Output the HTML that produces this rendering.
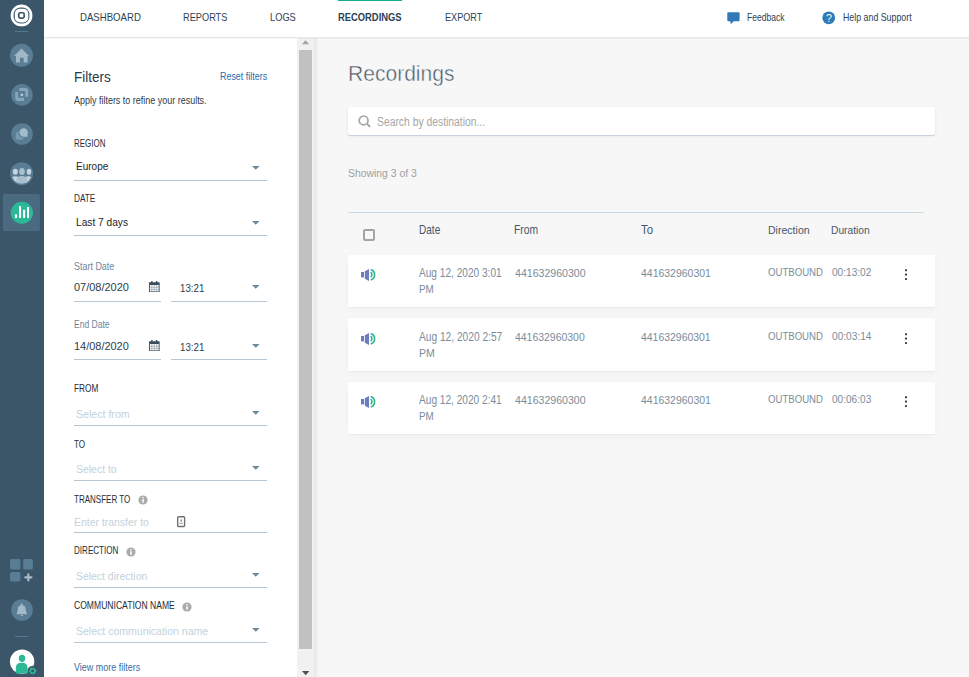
<!DOCTYPE html>
<html><head><meta charset="utf-8"><title>Recordings</title>
<style>
*{margin:0;padding:0;box-sizing:border-box}
html,body{width:969px;height:677px;overflow:hidden;background:#f7f7f7;font-family:"Liberation Sans",sans-serif}
.a{position:absolute;white-space:nowrap}
.t{position:absolute;white-space:nowrap;line-height:20px;height:20px}
.ul{position:absolute;height:1px;background:#b5c7d4}
.dd{position:absolute;width:0;height:0;border-left:3.75px solid transparent;border-right:3.75px solid transparent;border-top:3.3px solid #6f899c}
.row{position:absolute;left:348px;width:587px;background:#fff;box-shadow:0 1px 0 rgba(0,0,0,0.03),0 2px 8px rgba(0,0,0,0.035)}
</style></head><body>
<div class="a" style="left:0;top:0">
<svg width="44" height="677" style="position:absolute;left:0;top:0">
 <defs><clipPath id="pc"><circle cx="21.65" cy="173.5" r="10.2"/></clipPath></defs>
 <rect width="44" height="677" fill="#3b5669"/>
 <circle cx="21.55" cy="15.45" r="10.9" fill="#fff"/>
 <rect x="13.6" y="7.6" width="15.8" height="15.9" rx="6.8" fill="#3b5669"/>
 <rect x="14.8" y="8.8" width="13.5" height="13.7" rx="5" fill="#fff"/>
 <rect x="17.9" y="11.9" width="7.1" height="7.1" rx="2.4" fill="#3b5669"/>
 <rect x="19.6" y="13.6" width="3.7" height="3.7" rx="0.8" fill="#fff"/>
 <rect x="15" y="31" width="13" height="1" fill="#557990"/>
 <circle cx="21.5" cy="55.3" r="11.5" fill="#587d94"/>
 <path d="M14 56 L21.5 48.5 L29 56 L27.5 56 L27.5 62.5 L23.6 62.5 L23.6 57.8 L19.9 57.8 L19.9 62.5 L16 62.5 L16 56 Z" fill="#a0b8c6"/>
 <circle cx="21.9" cy="94.9" r="10.8" fill="#587d94"/>
 <path d="M19.4 87.9 H25.2 A3 3 0 0 1 28.2 90.9 V96.7 H25.3 V91 H19.4 Z" fill="#87a6b9"/>
 <path d="M15.2 92.1 H18.1 V97.8 H24 V100.9 H18.2 A3 3 0 0 1 15.2 97.9 Z" fill="#87a6b9"/>
 <rect x="20.7" y="93.7" width="2.3" height="2.3" fill="#b8ccd8"/>
 <circle cx="22" cy="134" r="10.8" fill="#587d94"/>
 <circle cx="20.3" cy="135.2" r="4.6" fill="#7b9bae"/>
 <rect x="15.7" y="135.2" width="4.6" height="4.3" fill="#7b9bae"/>
 <circle cx="23.65" cy="132.5" r="5.3" fill="#587d94"/>
 <circle cx="23.65" cy="132.5" r="4.2" fill="#a3bccb"/>
 <path d="M24 136.7 L27.6 136.7 L27.3 134 Z" fill="#a3bccb"/>
 <circle cx="21.65" cy="173.7" r="11.5" fill="#587d94"/>
 <g clip-path="url(#pc)">
  <ellipse cx="15.3" cy="180.5" rx="5" ry="4.3" fill="#c5d4dd"/>
  <ellipse cx="28.4" cy="180.5" rx="5" ry="4.3" fill="#c5d4dd"/>
  <path d="M16.5 186 V180 Q16.5 176 21.9 176 Q27.3 176 27.3 180 V186 Z" fill="#a9c0cd"/>
 </g>
 <ellipse cx="15.3" cy="171.8" rx="2.5" ry="3" fill="#c5d4dd"/>
 <ellipse cx="29" cy="171.8" rx="2.3" ry="3" fill="#c5d4dd"/>
 <ellipse cx="22" cy="171.5" rx="2.8" ry="3.5" fill="#a9c0cd"/>
 <rect x="2.9" y="193.9" width="37" height="37" rx="1.5" fill="#4a6a80"/>
 <circle cx="21.9" cy="212.75" r="11.1" fill="#2bb896"/>
 <rect x="14.9" y="214.4" width="2.2" height="3.5" fill="#fff"/>
 <rect x="19" y="206.2" width="2.1" height="11.7" fill="#fff"/>
 <rect x="23" y="209.8" width="2.1" height="8.1" fill="#fff"/>
 <rect x="27" y="207" width="2" height="10.9" fill="#fff"/>
 <rect x="10" y="559" width="10.4" height="10.6" rx="1.6" fill="#587d94"/>
 <rect x="23.2" y="559" width="9.7" height="10.6" rx="1.6" fill="#587d94"/>
 <rect x="10" y="572" width="10.4" height="9.6" rx="1.6" fill="#587d94"/>
 <path d="M28.35 574.4 V580.4 M25.3 577.4 H31.4" stroke="#a5bccb" stroke-width="2.2" stroke-linecap="round"/>
 <circle cx="22" cy="610" r="10.8" fill="#587d94"/>
 <path d="M16.6 614.2 L17.3 612 L18 607.5 Q18.5 605.3 21.7 605 Q24.9 605.3 25.4 607.5 L26.3 612 L27 614.2 Z" fill="#a2bac8"/>
 <circle cx="21.7" cy="604.6" r="1" fill="#a2bac8"/>
 <rect x="21" y="615" width="1.8" height="1" fill="#a2bac8"/>
 <rect x="15" y="636" width="13.5" height="1" fill="#557990"/>
 <circle cx="22.1" cy="661.6" r="12.2" fill="#fff"/>
 <ellipse cx="22" cy="658.3" rx="3.2" ry="3.6" fill="#2bb896"/>
 <path d="M15.8 673.5 V668 Q15.8 662.7 21.7 662.7 Q27.6 662.7 27.6 668 V673.5 Z" fill="#2bb896"/>
 <circle cx="32.7" cy="670.9" r="5.2" fill="#3b5669"/>
 <circle cx="32.7" cy="670.9" r="2.6" fill="none" stroke="#2bb896" stroke-width="1.8" stroke-dasharray="1.5 0.9"/>
 <circle cx="32.7" cy="670.9" r="2.2" fill="none" stroke="#2bb896" stroke-width="1.2"/>
</svg>
</div>

<div class="a" style="left:44px;top:0;width:925px;height:37px;background:#fff"></div>
<div class="a" style="left:338px;top:0;width:64px;height:1px;background:#14ae8c"></div>
<svg class="a" style="left:727px;top:12px" width="13" height="13"><rect x="0.3" y="0.3" width="12.3" height="8.9" rx="1" fill="#2f7ab7"/><path d="M3.2 9 L3.9 12.3 L6.8 9 Z" fill="#2f7ab7"/></svg>
<svg class="a" style="left:822px;top:11px" width="14" height="14"><circle cx="6.7" cy="6.8" r="6.4" fill="#2f7ab7"/><text x="6.8" y="10.6" font-size="10.5" text-anchor="middle" fill="#fff" font-family="Liberation Sans">?</text></svg>

<div class="a" style="left:44px;top:38px;width:253px;height:639px;background:#fff"></div>
<div class="a" style="left:297px;top:38px;width:17px;height:639px;background:#f1f1f1"></div>
<div class="a" style="left:299px;top:50px;width:13px;height:599px;background:#c1c1c1"></div>
<svg class="a" style="left:302px;top:40px" width="8" height="5"><path d="M0 4.2 L3.6 0.2 L7.2 4.2 Z" fill="#a3a3a3"/></svg>
<svg class="a" style="left:302px;top:671px" width="8" height="5"><path d="M0 0 L7.4 0 L3.7 4.2 Z" fill="#505050"/></svg>
<div class="a" style="left:314px;top:38px;width:5px;height:639px;background:linear-gradient(90deg,#e5e5e5,#f7f7f7)"></div>
<div class="a" style="left:44px;top:37px;width:925px;height:1px;background:rgba(0,0,0,0.063)"></div>
<div class="a" style="left:44px;top:38px;width:925px;height:1px;background:rgba(0,0,0,0.03)"></div>

<div class="ul" style="left:74px;top:180px;width:193px"></div>
<div class="ul" style="left:74px;top:235px;width:193px"></div>
<div class="ul" style="left:74px;top:425px;width:193px"></div>
<div class="ul" style="left:74px;top:480px;width:193px"></div>
<div class="ul" style="left:74px;top:532px;width:193px"></div>
<div class="ul" style="left:74px;top:587px;width:193px"></div>
<div class="ul" style="left:74px;top:642px;width:193px"></div>
<div class="ul" style="left:74px;top:301px;width:87px"></div>
<div class="ul" style="left:171px;top:301px;width:96px"></div>
<div class="ul" style="left:74px;top:359px;width:87px"></div>
<div class="ul" style="left:171px;top:359px;width:96px"></div>
<svg class="a" style="left:252.1px;top:166px" width="8" height="4"><path d="M0 0 H7.6 L3.8 3.7 Z" fill="#6f899c"/></svg>
<svg class="a" style="left:252.1px;top:221.2px" width="8" height="4"><path d="M0 0 H7.6 L3.8 3.7 Z" fill="#6f899c"/></svg>
<svg class="a" style="left:252.1px;top:285.2px" width="8" height="4"><path d="M0 0 H7.6 L3.8 3.7 Z" fill="#6f899c"/></svg>
<svg class="a" style="left:252.1px;top:343.8px" width="8" height="4"><path d="M0 0 H7.6 L3.8 3.7 Z" fill="#6f899c"/></svg>
<svg class="a" style="left:252.1px;top:411px" width="8" height="4"><path d="M0 0 H7.6 L3.8 3.7 Z" fill="#6f899c"/></svg>
<svg class="a" style="left:252.1px;top:466.1px" width="8" height="4"><path d="M0 0 H7.6 L3.8 3.7 Z" fill="#6f899c"/></svg>
<svg class="a" style="left:252.1px;top:573px" width="8" height="4"><path d="M0 0 H7.6 L3.8 3.7 Z" fill="#6f899c"/></svg>
<svg class="a" style="left:252.1px;top:628.2px" width="8" height="4"><path d="M0 0 H7.6 L3.8 3.7 Z" fill="#6f899c"/></svg>
<svg class="a" style="left:149px;top:281px" width="11" height="11" viewBox="0 0 11 11">
 <rect x="0.45" y="1.8" width="9.7" height="9" fill="none" stroke="#3b4d5e" stroke-width="0.9"/>
 <rect x="0.45" y="1.8" width="9.7" height="2.2" fill="#3b4d5e"/>
 <rect x="2.2" y="0" width="1.4" height="2.4" rx="0.5" fill="#3b4d5e"/>
 <rect x="6.9" y="0" width="1.4" height="2.4" rx="0.5" fill="#3b4d5e"/>
 <path d="M0.5 6.2 H10.1 M0.5 8.4 H10.1 M2.85 4 V10.8 M5.3 4 V10.8 M7.75 4 V10.8" stroke="#7d8b97" stroke-width="0.55"/>
</svg>
<svg class="a" style="left:149px;top:340px" width="11" height="11" viewBox="0 0 11 11">
 <rect x="0.45" y="1.8" width="9.7" height="9" fill="none" stroke="#3b4d5e" stroke-width="0.9"/>
 <rect x="0.45" y="1.8" width="9.7" height="2.2" fill="#3b4d5e"/>
 <rect x="2.2" y="0" width="1.4" height="2.4" rx="0.5" fill="#3b4d5e"/>
 <rect x="6.9" y="0" width="1.4" height="2.4" rx="0.5" fill="#3b4d5e"/>
 <path d="M0.5 6.2 H10.1 M0.5 8.4 H10.1 M2.85 4 V10.8 M5.3 4 V10.8 M7.75 4 V10.8" stroke="#7d8b97" stroke-width="0.55"/>
</svg>
<svg class="a" style="left:137.5px;top:495.1px" width="10" height="10"><circle cx="5" cy="5" r="4.6" fill="#ababab"/><rect x="4.3" y="4.2" width="1.5" height="3.5" fill="#fff"/><circle cx="5" cy="2.8" r="0.8" fill="#fff"/></svg>
<svg class="a" style="left:125.5px;top:547.3px" width="10" height="10"><circle cx="5" cy="5" r="4.6" fill="#ababab"/><rect x="4.3" y="4.2" width="1.5" height="3.5" fill="#fff"/><circle cx="5" cy="2.8" r="0.8" fill="#fff"/></svg>
<svg class="a" style="left:181.5px;top:602.3px" width="10" height="10"><circle cx="5" cy="5" r="4.6" fill="#ababab"/><rect x="4.3" y="4.2" width="1.5" height="3.5" fill="#fff"/><circle cx="5" cy="2.8" r="0.8" fill="#fff"/></svg>
<svg class="a" style="left:176.8px;top:516.2px" width="9" height="12"><rect x="0.7" y="0.7" width="6.9" height="9.8" rx="1" fill="none" stroke="#707070" stroke-width="1.4"/><path d="M4.15 2.6 L5.3 5.6 H3 Z" fill="#8a8a8a"/><rect x="2.5" y="6.8" width="3.3" height="1.1" fill="#a0a0a0"/></svg>
<div class="a" style="left:348px;top:107px;width:587px;height:28px;background:#fff;border-radius:2px;box-shadow:0 1px 1px rgba(120,150,180,0.35),0 1px 5px rgba(0,0,0,0.045)"></div>
<svg class="a" style="left:358px;top:114px" width="14" height="14"><circle cx="5.6" cy="6.4" r="4.4" fill="none" stroke="#a5a5a5" stroke-width="1.7"/><path d="M8.8 9.6 L12.2 12.9" stroke="#a5a5a5" stroke-width="2"/></svg>
<div class="a" style="left:348px;top:212px;width:576px;height:1px;background:#c9d8e1"></div>
<div class="a" style="left:363px;top:229px;width:12px;height:12px;border:2px solid #a3a3a3;border-radius:2px"></div>
<div class="row" style="top:255px;height:52px"></div>
<div class="row" style="top:318px;height:53px"></div>
<div class="row" style="top:382px;height:52px"></div>
<svg class="a" style="left:361px;top:268.9px" width="16" height="13" viewBox="0 0 16 13">
 <rect x="0" y="3" width="3" height="5.4" fill="#6b7dbf"/>
 <path d="M3.8 2.2 L8 0 V12 L3.8 9.7 Z" fill="#6b7dbf"/>
 <path d="M9.6 3.2 A3 3 0 0 1 9.6 8.2" fill="none" stroke="#2db592" stroke-width="1.6"/>
 <path d="M9.8 0.4 A5.6 5.6 0 0 1 9.8 11" fill="none" stroke="#2db592" stroke-width="1.6"/>
</svg>
<svg class="a" style="left:904px;top:269px" width="4" height="12"><rect x="1" y="0.2" width="2" height="2" rx="0.4" fill="#383838"/><rect x="1" y="4.5" width="2" height="2" rx="0.4" fill="#383838"/><rect x="1" y="9" width="2" height="2" rx="0.4" fill="#383838"/></svg>
<svg class="a" style="left:361px;top:332.9px" width="16" height="13" viewBox="0 0 16 13">
 <rect x="0" y="3" width="3" height="5.4" fill="#6b7dbf"/>
 <path d="M3.8 2.2 L8 0 V12 L3.8 9.7 Z" fill="#6b7dbf"/>
 <path d="M9.6 3.2 A3 3 0 0 1 9.6 8.2" fill="none" stroke="#2db592" stroke-width="1.6"/>
 <path d="M9.8 0.4 A5.6 5.6 0 0 1 9.8 11" fill="none" stroke="#2db592" stroke-width="1.6"/>
</svg>
<svg class="a" style="left:904px;top:333px" width="4" height="12"><rect x="1" y="0.2" width="2" height="2" rx="0.4" fill="#383838"/><rect x="1" y="4.5" width="2" height="2" rx="0.4" fill="#383838"/><rect x="1" y="9" width="2" height="2" rx="0.4" fill="#383838"/></svg>
<svg class="a" style="left:361px;top:395.9px" width="16" height="13" viewBox="0 0 16 13">
 <rect x="0" y="3" width="3" height="5.4" fill="#6b7dbf"/>
 <path d="M3.8 2.2 L8 0 V12 L3.8 9.7 Z" fill="#6b7dbf"/>
 <path d="M9.6 3.2 A3 3 0 0 1 9.6 8.2" fill="none" stroke="#2db592" stroke-width="1.6"/>
 <path d="M9.8 0.4 A5.6 5.6 0 0 1 9.8 11" fill="none" stroke="#2db592" stroke-width="1.6"/>
</svg>
<svg class="a" style="left:904px;top:396px" width="4" height="12"><rect x="1" y="0.2" width="2" height="2" rx="0.4" fill="#383838"/><rect x="1" y="4.5" width="2" height="2" rx="0.4" fill="#383838"/><rect x="1" y="9" width="2" height="2" rx="0.4" fill="#383838"/></svg>
<div class="t" id="nav1" style="left:80.2px;top:6.82px;font-size:11.09px;letter-spacing:0px;transform:scaleX(0.8676);transform-origin:0 0;color:#2c4255">DASHBOARD</div>
<div class="t" id="nav2" style="left:183.22px;top:6.95px;font-size:11.16px;letter-spacing:0px;transform:scaleX(0.8264);transform-origin:0 0;color:#2c4255">REPORTS</div>
<div class="t" id="nav3" style="left:270.02px;top:6.88px;font-size:11.16px;letter-spacing:0px;transform:scaleX(0.8317);transform-origin:0 0;color:#2c4255">LOGS</div>
<div class="t" id="nav4" style="left:338.05px;top:7.18px;font-size:11.16px;letter-spacing:0px;transform:scaleX(0.8408);transform-origin:0 0;color:#2c4255;font-weight:700">RECORDINGS</div>
<div class="t" id="nav5" style="left:444.82px;top:7.14px;font-size:11.16px;letter-spacing:0px;transform:scaleX(0.8171);transform-origin:0 0;color:#2c4255">EXPORT</div>
<div class="t" id="fb" style="left:747.11px;top:8.26px;font-size:10.1px;letter-spacing:0px;transform:scaleX(0.8436);transform-origin:0 0;color:#2c4255">Feedback</div>
<div class="t" id="hs" style="left:843.02px;top:8.37px;font-size:10.4px;letter-spacing:0px;transform:scaleX(0.8482);transform-origin:0 0;color:#2c4255">Help and Support</div>
<div class="t" id="filters" style="left:74.07px;top:66.79px;font-size:13.84px;letter-spacing:0px;transform:scaleX(0.9746);transform-origin:0 0;color:#2c3a47">Filters</div>
<div class="t" id="reset" style="left:219.84px;top:66.73px;font-size:10.1px;letter-spacing:0px;transform:scaleX(0.8838);transform-origin:0 0;color:#276cb0">Reset filters</div>
<div class="t" id="apply" style="left:74.28px;top:90.63px;font-size:10.1px;letter-spacing:0px;transform:scaleX(0.8886);transform-origin:0 0;color:#2c3a47">Apply filters to refine your results.</div>
<div class="t" id="l_region" style="left:74.11px;top:133.91px;font-size:10.1px;letter-spacing:0px;transform:scaleX(0.7892);transform-origin:0 0;color:#1f2d3a">REGION</div>
<div class="t" id="v_region" style="left:75.83px;top:155.79px;font-size:11.4px;letter-spacing:0px;transform:scaleX(0.8786);transform-origin:0 0;color:#1e2226">Europe</div>
<div class="t" id="l_date" style="left:74.16px;top:188.55px;font-size:10.1px;letter-spacing:0px;transform:scaleX(0.8141);transform-origin:0 0;color:#1f2d3a">DATE</div>
<div class="t" id="v_date" style="left:75.77px;top:211.51px;font-size:11.4px;letter-spacing:0px;transform:scaleX(0.8926);transform-origin:0 0;color:#1e2226">Last 7 days</div>
<div class="t" id="l_sd" style="left:74.25px;top:257.0px;font-size:10.1px;letter-spacing:0px;transform:scaleX(0.8868);transform-origin:0 0;color:#6d879c">Start Date</div>
<div class="t" id="v_sd" style="left:74.09px;top:276.58px;font-size:10.85px;letter-spacing:0px;transform:scaleX(1.0121);transform-origin:0 0;color:#2a3d4d">07/08/2020</div>
<div class="t" id="v_st" style="left:179.7px;top:277.66px;font-size:11.06px;letter-spacing:0px;transform:scaleX(0.8779);transform-origin:0 0;color:#2a3d4d">13:21</div>
<div class="t" id="l_ed" style="left:74.04px;top:314.69px;font-size:10.1px;letter-spacing:0px;transform:scaleX(0.8447);transform-origin:0 0;color:#6d879c">End Date</div>
<div class="t" id="v_ed" style="left:74.3px;top:335.67px;font-size:10.92px;letter-spacing:0px;transform:scaleX(1.0036);transform-origin:0 0;color:#2a3d4d">14/08/2020</div>
<div class="t" id="v_et" style="left:179.7px;top:336.66px;font-size:11.06px;letter-spacing:0px;transform:scaleX(0.8779);transform-origin:0 0;color:#2a3d4d">13:21</div>
<div class="t" id="l_from" style="left:74.3px;top:378.85px;font-size:10.1px;letter-spacing:0px;transform:scaleX(0.8203);transform-origin:0 0;color:#1f2d3a">FROM</div>
<div class="t" id="p_from" style="left:75.84px;top:403.89px;font-size:11.26px;letter-spacing:0px;transform:scaleX(0.9421);transform-origin:0 0;color:#c3d2dc">Select from</div>
<div class="t" id="l_to" style="left:73.96px;top:434.81px;font-size:10.1px;letter-spacing:0px;transform:scaleX(0.7984);transform-origin:0 0;color:#1f2d3a">TO</div>
<div class="t" id="p_to" style="left:75.78px;top:458.91px;font-size:11.26px;letter-spacing:0px;transform:scaleX(0.9285);transform-origin:0 0;color:#c3d2dc">Select to</div>
<div class="t" id="l_tr" style="left:74.17px;top:489.85px;font-size:10.1px;letter-spacing:0px;transform:scaleX(0.7936);transform-origin:0 0;color:#1f2d3a">TRANSFER TO</div>
<div class="t" id="p_tr" style="left:74.29px;top:512.1px;font-size:11.54px;letter-spacing:0px;transform:scaleX(0.9055);transform-origin:0 0;color:#c3d2dc">Enter transfer to</div>
<div class="t" id="l_dir" style="left:74.4px;top:540.73px;font-size:10.1px;letter-spacing:0px;transform:scaleX(0.7993);transform-origin:0 0;color:#1f2d3a">DIRECTION</div>
<div class="t" id="p_dir" style="left:75.81px;top:566.07px;font-size:11.26px;letter-spacing:0px;transform:scaleX(0.9263);transform-origin:0 0;color:#c3d2dc">Select direction</div>
<div class="t" id="l_cn" style="left:74.2px;top:595.85px;font-size:10.1px;letter-spacing:0px;transform:scaleX(0.8488);transform-origin:0 0;color:#1f2d3a">COMMUNICATION NAME</div>
<div class="t" id="p_cn" style="left:76.11px;top:621.45px;font-size:11.33px;letter-spacing:0px;transform:scaleX(0.9284);transform-origin:0 0;color:#c3d2dc">Select communication name</div>
<div class="t" id="more" style="left:74.23px;top:658.43px;font-size:10.1px;letter-spacing:0px;transform:scaleX(0.8888);transform-origin:0 0;color:#3a6ea3">View more filters</div>
<div class="t" id="title" style="left:348.04px;top:63.63px;font-size:22.4px;letter-spacing:0px;transform:scaleX(0.9403);transform-origin:0 0;color:#4a5a6a;-webkit-text-stroke:0.45px #f7f7f7">Recordings</div>
<div class="t" id="search" style="left:377.33px;top:112.32px;font-size:12.0px;letter-spacing:0px;transform:scaleX(0.8621);transform-origin:0 0;color:#a6a6a6">Search by destination...</div>
<div class="t" id="showing" style="left:348.31px;top:163.01px;font-size:11.8px;letter-spacing:0px;transform:scaleX(0.8819);transform-origin:0 0;color:#a0a0a0">Showing 3 of 3</div>
<div class="t" id="h_date" style="left:418.98px;top:220.21px;font-size:12.02px;letter-spacing:0px;transform:scaleX(0.8362);transform-origin:0 0;color:#45576a">Date</div>
<div class="t" id="h_from" style="left:514.14px;top:220.39px;font-size:12.02px;letter-spacing:0px;transform:scaleX(0.8602);transform-origin:0 0;color:#45576a">From</div>
<div class="t" id="h_to" style="left:641.15px;top:220.21px;font-size:12.02px;letter-spacing:0px;transform:scaleX(0.9455);transform-origin:0 0;color:#45576a">To</div>
<div class="t" id="h_dir" style="left:767.71px;top:219.67px;font-size:11.73px;letter-spacing:0px;transform:scaleX(0.9001);transform-origin:0 0;color:#45576a">Direction</div>
<div class="t" id="h_dur" style="left:831.09px;top:219.91px;font-size:11.73px;letter-spacing:0px;transform:scaleX(0.8735);transform-origin:0 0;color:#45576a">Duration</div>
<div class="t" id="r0_d1" style="left:419.27px;top:263.46px;font-size:11.9px;letter-spacing:0px;transform:scaleX(0.8501);transform-origin:0 0;color:#7a8c9a">Aug 12, 2020 3:01</div>
<div class="t" id="r0_d2" style="left:419.47px;top:279.34px;font-size:11.11px;letter-spacing:0px;transform:scaleX(0.8796);transform-origin:0 0;color:#7a8c9a">PM</div>
<div class="t" id="r0_fr" style="left:514.78px;top:263.44px;font-size:11.37px;letter-spacing:0px;transform:scaleX(0.9305);transform-origin:0 0;color:#7a8c9a">441632960300</div>
<div class="t" id="r0_to" style="left:640.78px;top:263.23px;font-size:11.37px;letter-spacing:0px;transform:scaleX(0.9217);transform-origin:0 0;color:#7a8c9a">441632960301</div>
<div class="t" id="r0_dir" style="left:768.01px;top:261.53px;font-size:11.26px;letter-spacing:0px;transform:scaleX(0.8535);transform-origin:0 0;color:#7a8c9a">OUTBOUND</div>
<div class="t" id="r0_dur" style="left:831.87px;top:261.61px;font-size:11.26px;letter-spacing:0px;transform:scaleX(0.8971);transform-origin:0 0;color:#7a8c9a">00:13:02</div>
<div class="t" id="r1_d1" style="left:419.28px;top:327.2px;font-size:11.9px;letter-spacing:0px;transform:scaleX(0.8564);transform-origin:0 0;color:#7a8c9a">Aug 12, 2020 2:57</div>
<div class="t" id="r1_d2" style="left:419.38px;top:343.48px;font-size:11.11px;letter-spacing:0px;transform:scaleX(0.9459);transform-origin:0 0;color:#7a8c9a">PM</div>
<div class="t" id="r1_fr" style="left:514.66px;top:327.18px;font-size:11.37px;letter-spacing:0px;transform:scaleX(0.9193);transform-origin:0 0;color:#7a8c9a">441632960300</div>
<div class="t" id="r1_to" style="left:640.84px;top:327.33px;font-size:11.37px;letter-spacing:0px;transform:scaleX(0.9191);transform-origin:0 0;color:#7a8c9a">441632960301</div>
<div class="t" id="r1_dir" style="left:768.01px;top:325.97px;font-size:11.26px;letter-spacing:0px;transform:scaleX(0.8521);transform-origin:0 0;color:#7a8c9a">OUTBOUND</div>
<div class="t" id="r1_dur" style="left:832.11px;top:325.81px;font-size:11.26px;letter-spacing:0px;transform:scaleX(0.9014);transform-origin:0 0;color:#7a8c9a">00:03:14</div>
<div class="t" id="r2_d1" style="left:419.22px;top:390.46px;font-size:11.9px;letter-spacing:0px;transform:scaleX(0.8513);transform-origin:0 0;color:#7a8c9a">Aug 12, 2020 2:41</div>
<div class="t" id="r2_d2" style="left:419.47px;top:406.34px;font-size:11.11px;letter-spacing:0px;transform:scaleX(0.8796);transform-origin:0 0;color:#7a8c9a">PM</div>
<div class="t" id="r2_fr" style="left:514.78px;top:390.44px;font-size:11.37px;letter-spacing:0px;transform:scaleX(0.9305);transform-origin:0 0;color:#7a8c9a">441632960300</div>
<div class="t" id="r2_to" style="left:640.78px;top:390.23px;font-size:11.37px;letter-spacing:0px;transform:scaleX(0.9217);transform-origin:0 0;color:#7a8c9a">441632960301</div>
<div class="t" id="r2_dir" style="left:768.01px;top:388.53px;font-size:11.26px;letter-spacing:0px;transform:scaleX(0.8535);transform-origin:0 0;color:#7a8c9a">OUTBOUND</div>
<div class="t" id="r2_dur" style="left:831.89px;top:388.57px;font-size:11.26px;letter-spacing:0px;transform:scaleX(0.8959);transform-origin:0 0;color:#7a8c9a">00:06:03</div>
</body></html>
